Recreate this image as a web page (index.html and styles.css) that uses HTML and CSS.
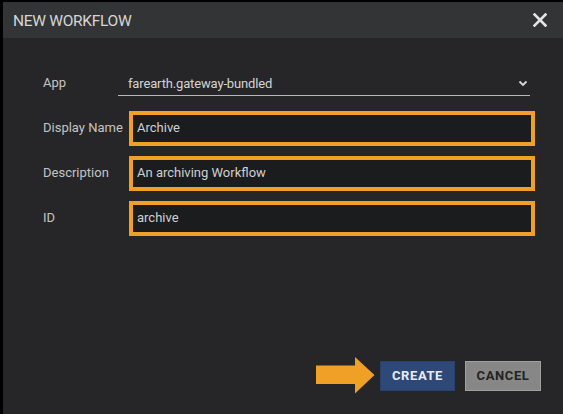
FILE: index.html
```html
<!DOCTYPE html>
<html>
<head>
<meta charset="utf-8">
<link rel="stylesheet" href="styles.css">
</head>
<body>
<div class="dialog">
  <div class="header">
    <span class="title">NEW WORKFLOW</span>
    <svg class="close" width="14" height="14" viewBox="0 0 14 14"><path d="M1.5 1.5 L12.5 12.5 M12.5 1.5 L1.5 12.5" stroke="#e6e6e6" stroke-width="2.6" stroke-linecap="square"/></svg>
  </div>
  <div class="content">
    <div class="row app-row">
      <span class="label">App</span>
      <div class="select">
        <span class="select-text">farearth.gateway-bundled</span>
        <svg class="chev" width="10" height="7" viewBox="0 0 10 7"><path d="M1.5 1.5 L5 5 L8.5 1.5" fill="none" stroke="#d8d8d8" stroke-width="1.8"/></svg>
      </div>
    </div>
    <div class="row">
      <span class="label">Display Name</span>
      <div class="box"><span class="val">Archive</span></div>
    </div>
    <div class="row">
      <span class="label">Description</span>
      <div class="box"><span class="val">An archiving Workflow</span></div>
    </div>
    <div class="row">
      <span class="label">ID</span>
      <div class="box"><span class="val">archive</span></div>
    </div>
  </div>
  <div class="footer">
    <svg class="arrow" width="59" height="37" viewBox="0 0 59 37"><path d="M0 8.5 H39 V0 L58.5 18 L39 36.5 V27 H0 Z" fill="#f0a027"/></svg>
    <button class="btn create">CREATE</button>
    <button class="btn cancel">CANCEL</button>
  </div>
</div>
</body>
</html>
```
FILE: styles.css
```css
html, body {
  margin: 0;
  padding: 0;
  background: #000;
}
body {
  width: 563px;
  height: 414px;
  overflow: hidden;
  font-family: Roboto, "Liberation Sans", Arial, sans-serif;
}
.dialog {
  margin: 2px 0 0 3px;
  width: 560px;
  height: 412px;
  background: #262628;
  display: flex;
  flex-direction: column;
}
.header {
  height: 36px;
  background: #333435;
  display: flex;
  align-items: center;
  justify-content: space-between;
  padding: 0 16px 0 10px;
  flex-shrink: 0;
}
.title {
  color: #d6d6d6;
  font-size: 15.5px;
  letter-spacing: -0.3px;
  margin-top: 1px;
}
.close {
  display: block;
}
.content {
  padding: 33px 0 0 40px;
  display: flex;
  flex-direction: column;
  gap: 10px;
  flex: 1;
}
.row {
  display: flex;
  align-items: center;
  height: 35px;
}
.label {
  width: 75px;
  flex-shrink: 0;
  color: #c4c4c4;
  font-size: 13px;
  margin-top: -3px;
  white-space: nowrap;
}
.app-row {
  height: 26px;
  align-items: flex-start;
  margin-bottom: 4px;
}
.app-row .label {
  margin-top: 4px;
}
.select {
  width: 412px;
  height: 25px;
  border-bottom: 1px solid #b8b8b8;
  display: flex;
  align-items: center;
  justify-content: space-between;
  padding: 0 2px 0 10px;
  box-sizing: border-box;
}
.select-text {
  color: #d4d4d4;
  font-size: 13px;
  letter-spacing: -0.15px;
}
.chev {
  display: block;
  margin-top: 1px;
}
.box {
  margin-left: 11px;
  width: 406px;
  height: 35px;
  box-sizing: border-box;
  border: 4.5px solid #f0a027;
  background: #1b1c1e;
  display: flex;
  align-items: center;
  padding-left: 4px;
}
.val {
  color: #d0d0d0;
  font-size: 13px;
  margin-top: -3px;
}
.footer {
  display: flex;
  align-items: center;
  justify-content: flex-end;
  padding: 0 22px 20px 0;
  height: 37px;
}
.arrow {
  display: block;
  margin-right: 5px;
}
.btn {
  height: 30px;
  font-family: Roboto, "Liberation Sans", Arial, sans-serif;
  font-size: 13px;
  font-weight: bold;
  letter-spacing: 0.6px;
  padding: 0;
  box-sizing: border-box;
  cursor: pointer;
}
.create {
  width: 75px;
  background: #2e4977;
  color: #e8ecf2;
  border: 1px solid #2a416b;
}
.cancel {
  width: 76px;
  margin-left: 10px;
  background: #878787;
  color: #232323;
  border: 1px solid #a0a0a0;
}
```
